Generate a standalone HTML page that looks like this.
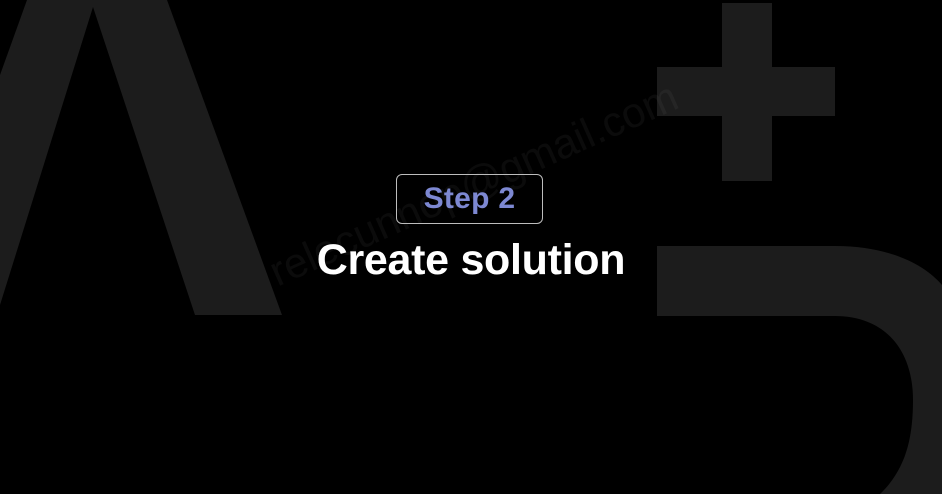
<!DOCTYPE html>
<html><head><style>
html,body{margin:0;padding:0;background:#000;width:942px;height:494px;overflow:hidden}
.wrap{position:relative;width:942px;height:494px}
svg{position:absolute;left:0;top:0}
.box{position:absolute;left:396px;top:174px;width:147px;height:50px;border:1.5px solid #bdbdbd;border-radius:6px;box-sizing:border-box;
text-align:center;font:bold 30px/48px "Liberation Sans",sans-serif;color:#7d88d2;letter-spacing:0.3px}
.title{position:absolute;left:0;width:942px;top:235px;text-align:center;font:bold 43px/50px "Liberation Sans",sans-serif;color:#fff;letter-spacing:-0.3px}
.wm{position:absolute;left:262px;top:252px;transform:rotate(-24deg);transform-origin:left top;font:42px "Liberation Sans",sans-serif;color:rgba(255,255,255,0.045);white-space:nowrap}
</style></head><body><div class="wrap">
<svg width="942" height="494" viewBox="0 0 942 494">
<g fill="#1c1c1c">
<polygon points="27,0 167,0 282,315 195,315 93,7 0,305 0,75"/>
<rect x="722" y="3" width="50" height="178"/>
<rect x="657" y="67" width="178" height="49"/>
<path d="M657,246 L835,246 C890,246 925,265 942,285 L942,494 L880,494 C905,470 913,440 913,400 C913,350 885,316 835,316 L657,316 Z"/>
</g>
</svg>
<div class="wm">relecunnop@gmail.com</div>
<div class="box">Step 2</div>
<div class="title">Create solution</div>
</div></body></html>
